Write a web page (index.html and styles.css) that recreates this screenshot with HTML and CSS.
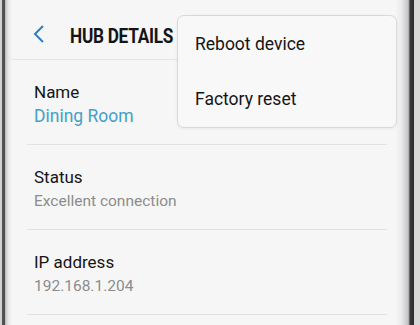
FILE: index.html
```html
<!DOCTYPE html>
<html lang="en">
<head>
    <meta charset="UTF-8"/>
    <meta name="viewport" content="width=device-width, initial-scale=1.0"/>
    <title>Hub details</title>
    <link rel="stylesheet" href="styles.css">
</head>
<body>
<div class="phone">
    <div class="bezel-left"></div>

    <div class="screen">
        <!-- 顶部标题栏 -->
        <div class="appbar">
            <svg class="back" width="12" height="18" viewBox="0 0 12 18">
                <polyline points="10,1 2,9 10,17" fill="none" stroke="#2f7cc4" stroke-width="2"/>
            </svg>
            <div class="title">HUB DETAILS</div>
        </div>

        <!-- 详情列表 -->
        <div class="list">
            <div class="row">
                <div class="label">Name</div>
                <div class="value link">Dining Room</div>
            </div>
            <div class="row">
                <div class="label">Status</div>
                <div class="value">Excellent connection</div>
            </div>
            <div class="row">
                <div class="label">IP address</div>
                <div class="value">192.168.1.204</div>
            </div>
        </div>

        <!-- 弹出菜单 -->
        <div class="menu">
            <div class="menu-item">Reboot device</div>
            <div class="menu-item">Factory reset</div>
        </div>
    </div>

    <div class="bezel-right"></div>
</div>
</body>
</html>
```

FILE: styles.css
```css
body {
    margin: 0;
    font-family: Roboto, "Liberation Sans", sans-serif;
    background-color: #f6f6f6;
    overflow: hidden;
}

.phone {
    display: flex;
    height: 325px;
}

.bezel-left {
    width: 12px;
    flex-shrink: 0;
    background: linear-gradient(to right, #d0d0d0 0, #d0d0d0 2px, #555 2px, #4a4a4a 5px, #b8b8bc 5px, #e4e4e6 8px, #f6f6f6 12px);
}

.bezel-right {
    width: 25px;
    flex-shrink: 0;
    background: linear-gradient(to right, #f6f6f6 0, #ececee 6px, #c4c4c8 13px, #9a9aa0 14px, #3a3a3a 15px, #2a2a2a 19px, #d8d8d8 19px);
}

.screen {
    position: relative;
    flex: 1;
    background-color: #f6f6f6;
}

.appbar {
    display: flex;
    align-items: center;
    height: 51px;
    padding-top: 8px;
    border-bottom: 1px solid #e4e4e4;
}

.back {
    margin-left: 21px;
    margin-right: 25px;
}

.title {
    margin-top: 4px;
    font-size: 20px;
    font-weight: bold;
    color: #151515;
    letter-spacing: -0.3px;
    transform: scaleX(0.86);
    transform-origin: left center;
    white-space: nowrap;
}

.list {
    padding: 0 8px 0 15px;
}

.row {
    padding: 20px 0 16px 7px;
    border-bottom: 1px solid #e2e2e2;
}

.label {
    font-size: 17px;
    line-height: 24px;
    color: #151515;
}

.value {
    font-size: 15.5px;
    line-height: 24px;
    color: #8c8c8c;
}

.value.link {
    font-size: 17.5px;
    color: #44a0c6;
}

.menu {
    position: absolute;
    top: 15px;
    left: 165px;
    width: 218px;
    height: 111px;
    display: flex;
    flex-direction: column;
    justify-content: space-around;
    background-color: #f8f8f8;
    border: 1px solid #d9d9d9;
    border-radius: 7px;
    box-shadow: 0 1px 3px rgba(0, 0, 0, 0.06);
}

.menu-item {
    font-size: 17.5px;
    color: #151515;
    padding-left: 17px;
}
```
